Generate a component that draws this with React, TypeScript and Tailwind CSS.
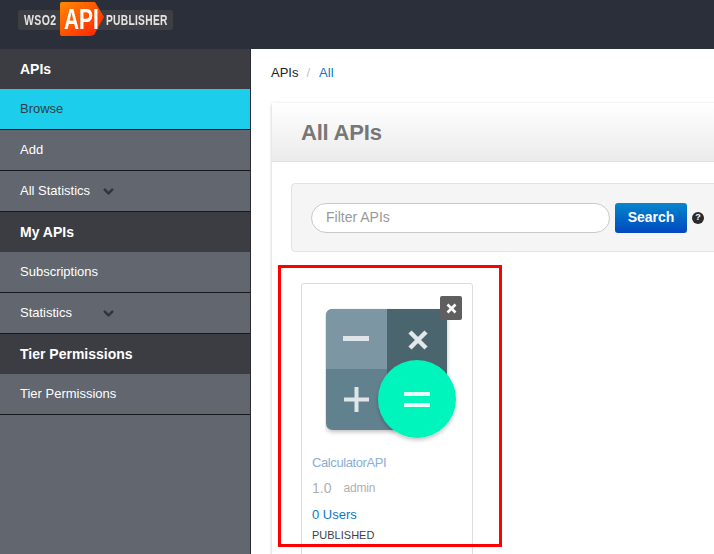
import { ChevronDown } from "lucide-react";

const font = "font-['Liberation_Sans',Arial,sans-serif]";

const menu = [
  { label: "APIs", kind: "head" },
  { label: "Browse", kind: "active" },
  { label: "Add", kind: "item" },
  { label: "All Statistics", kind: "item", caret: true },
  { label: "My APIs", kind: "head" },
  { label: "Subscriptions", kind: "item" },
  { label: "Statistics", kind: "item", caret: true },
  { label: "Tier Permissions", kind: "head" },
  { label: "Tier Permissions", kind: "item" },
];

const Logo = () => (
  <div className="relative ml-[18px] flex h-5 w-[155px] items-center rounded-[3px] bg-[#3d3f45]">
    <span className="absolute left-[6px] top-[2px] origin-left scale-x-[0.75] text-[14px] leading-4 font-bold tracking-[0.5px] text-[#e4e4e4]">
      WSO2
    </span>
    {/* orange tag */}
    <svg className="absolute left-[42px] top-[-8px]" width="46" height="34" viewBox="0 0 46 34">
      <defs>
        <linearGradient id="tag" x1="0" y1="0" x2="1" y2="1">
          <stop offset="0" stopColor="#ff8a00" />
          <stop offset="1" stopColor="#ff1c00" />
        </linearGradient>
      </defs>
      <path d="M2 0H35L44 15L34 33L30 34H2Q0 34 0 32V2Q0 0 2 0Z" fill="url(#tag)" />
    </svg>
    <span className="absolute left-[46px] top-[-6px] origin-left scale-x-[0.72] text-[29px] leading-[30px] font-bold text-white">
      API
    </span>
    <span className="absolute left-[88px] top-[2px] origin-left scale-x-[0.73] text-[14px] leading-4 font-bold tracking-[0.4px] text-[#e4e4e4]">
      PUBLISHER
    </span>
  </div>
);

const Sidebar = () => (
  <aside className="w-[251px] shrink-0 border-r border-[#2b2c31] bg-[#62666e]">
    {menu.map((row, idx) => {
      if (row.kind === "head") {
        return (
          <div key={idx} className="flex h-[40px] items-center bg-[#3c3d43] pl-5 text-[14px] font-bold text-white">
            {row.label}
          </div>
        );
      }
      return (
        <div
          key={idx}
          className={`relative flex h-[41px] items-center border-b border-[#17181b] pb-px pl-5 text-[13px] ${
            row.kind === "active" ? "bg-[#1ccdec] text-[#2c3e48]" : "text-white"
          }`}
        >
          {row.label}
          {row.caret && (
            <ChevronDown size={15} strokeWidth={4} className="absolute left-[101px] top-[13px] text-[#33343a]" />
          )}
        </div>
      );
    })}
  </aside>
);

const CalculatorIcon = () => (
  <svg width="140" height="140" viewBox="0 0 140 140" className="ml-[23px] mt-[24px]">
    <defs>
      <filter id="soft" x="-20%" y="-20%" width="140%" height="140%">
        <feDropShadow dx="0" dy="2" stdDeviation="2" floodColor="#000" floodOpacity="0.25" />
      </filter>
      <clipPath id="rounded">
        <path d="M8 1H115Q122 1 122 8V70L92 91L70 122H8Q1 122 1 115V8Q1 1 8 1Z" />
      </clipPath>
    </defs>
    <g filter="url(#soft)">
      <path d="M8 1H115Q122 1 122 8V70L92 91L70 122H8Q1 122 1 115V8Q1 1 8 1Z" fill="#62818f" />
    </g>
    <g clipPath="url(#rounded)">
      <rect x="1" y="1" width="61" height="60" fill="#7d96a3" />
      <rect x="62" y="1" width="60" height="70" fill="#4b656f" />
    </g>
    <rect x="18" y="28" width="26" height="5" fill="#dfe5e8" />
    <path d="M85 24L101 40M101 24L85 40" stroke="#e3e8ea" strokeWidth="4.5" />
    <path d="M31.5 79V104M19 91.5H44" stroke="#dfe5e8" strokeWidth="4" />
    <circle cx="92" cy="91" r="39" fill="#00f5bd" filter="url(#soft)" />
    <rect x="79" y="84" width="26" height="4" fill="#e8fbf6" />
    <rect x="79" y="95" width="26" height="4" fill="#e8fbf6" />
  </svg>
);

const ApiCard = () => (
  <div className="relative ml-[29px] mt-[31px] h-[300px] w-[172px] rounded-t-[3px] border border-[#dcdcdc] bg-white">
    <CalculatorIcon />
    <button className="absolute left-[138px] top-[12px] flex h-6 w-[22px] items-center justify-center rounded-[2px] bg-[#5f5f5f]">
      <svg width="11" height="11" viewBox="0 0 11 11">
        <path d="M1.5 1.5L9.5 9.5M9.5 1.5L1.5 9.5" stroke="#fff" strokeWidth="2.6" />
      </svg>
    </button>
    <div className="mt-[5px] pl-[10px]">
      <div className="text-[13px] leading-5 tracking-[-0.4px] text-[#8aaed6]">CalculatorAPI</div>
      <div className="mt-[5px] flex h-5 items-center text-[#b0b0b0]">
        <span className="text-[14px]">1.0</span>
        <span className="ml-[12px] text-[12px] tracking-[-0.2px]">admin</span>
      </div>
      <div className="mt-[7px] text-[13px] leading-5 text-[#0b78c4]">0 Users</div>
      <div className="text-[11px] leading-5 text-[#3f3f3f]">PUBLISHED</div>
    </div>
  </div>
);

const App = () => {
  return (
    <div className={`relative h-[554px] w-[714px] overflow-hidden bg-white ${font}`}>
      <header className="h-[49px] bg-[#2b2f3a] pt-[10px]">
        <Logo />
      </header>

      <div className="flex h-[505px]">
        <Sidebar />

        <main className="min-w-0 flex-1 pl-5">
          <div className="flex h-[54px] items-center pb-[6px] text-[13px]">
            <span className="text-[#222]">APIs</span>
            <span className="ml-[8px] mr-[9px] text-[#c4c4c4]">/</span>
            <span className="text-[#0b78c4]">All</span>
          </div>

          <section className="w-[600px] rounded-t-[4px] border-l border-[#e6e6e6] shadow-[0_0_3px_rgba(0,0,0,0.12)]">
            <div className="flex h-[59px] items-center border-b border-[#e2e2e2] bg-gradient-to-b from-white to-[#ebebeb] pl-[29px] pt-px text-[22px] font-bold tracking-[-0.2px] text-[#777]">
              All APIs
            </div>

            <div className="ml-[19px] mt-[21px] flex h-[69px] items-center rounded-[4px] border border-[#e3e3e3] bg-[#f5f5f5] pl-[19px]">
              <div className="flex h-[30px] w-[299px] items-center rounded-full border border-[#c9c9c9] bg-white pl-[14px] text-[14px] text-[#999]">
                Filter APIs
              </div>
              <button className="ml-[5px] flex h-[30px] w-[72px] items-center justify-center rounded-[3px] bg-gradient-to-b from-[#0d85cc] to-[#0447c0] text-[14px] font-bold text-white">
                Search
              </button>
              <span className="ml-[5px] flex h-3 w-3 items-center justify-center rounded-full bg-[#2b2b2b] text-[9px] font-bold text-white">
                ?
              </span>
            </div>

            <ApiCard />
          </section>
        </main>
      </div>

      {/* red annotation round the card */}
      <div className="absolute left-[278px] top-[265px] h-[282px] w-[224px] border-[3px] border-[#f00]" />
    </div>
  );
};

export default App;
